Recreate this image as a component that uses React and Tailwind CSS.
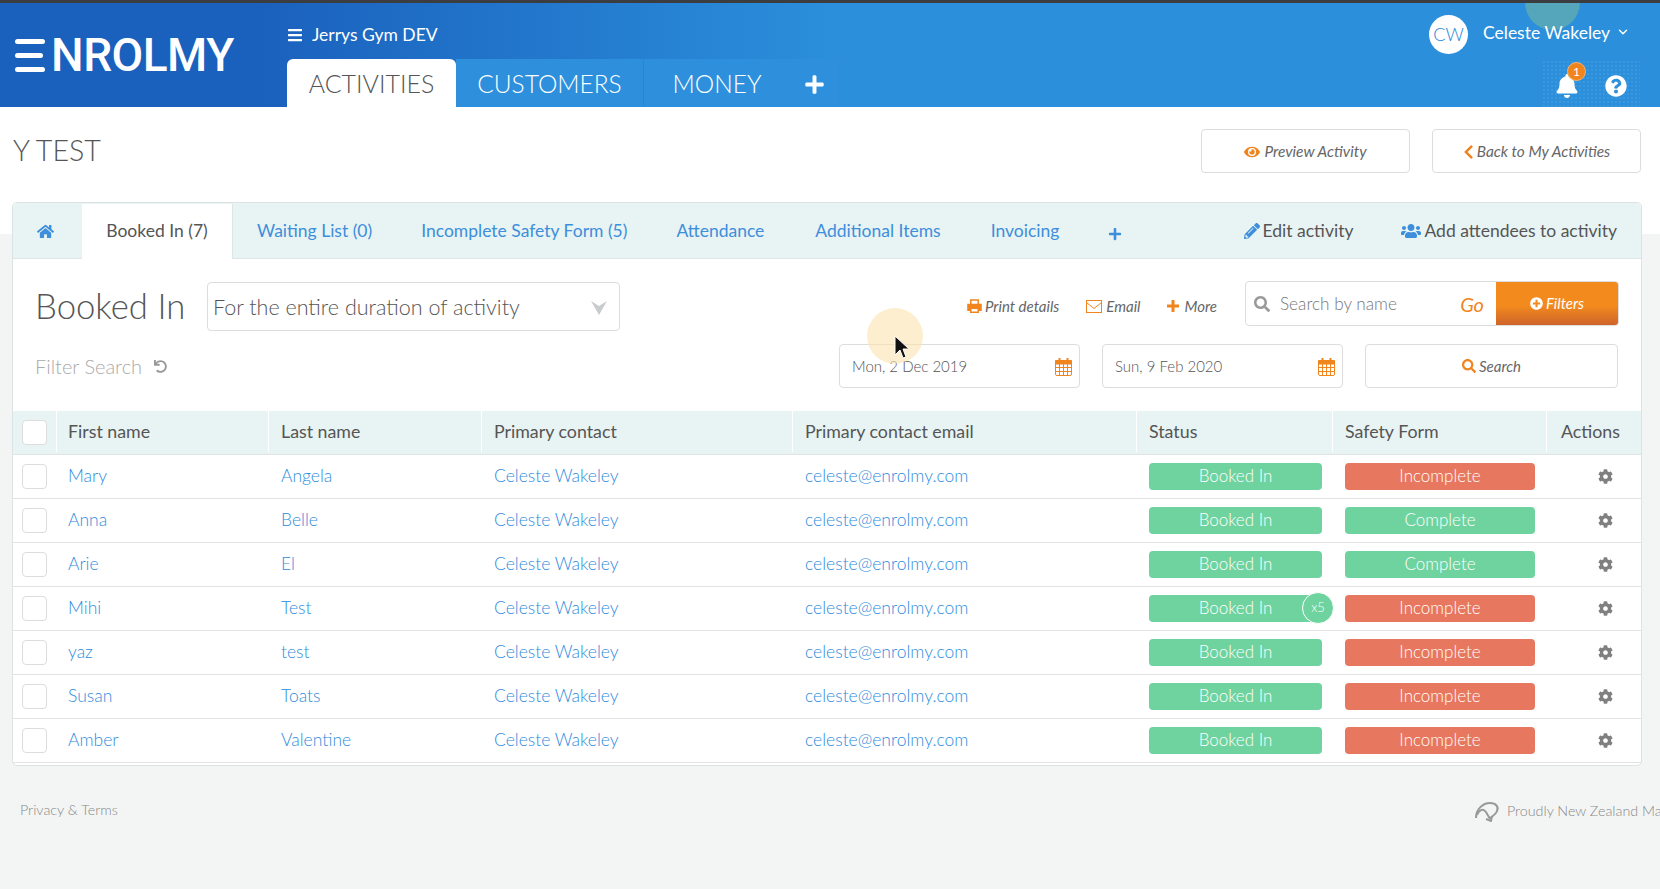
import {
  FaBars, FaBell, FaChevronLeft, FaCog, FaEye, FaHome, FaPencilAlt, FaPlus, FaPlusCircle,
  FaQuestionCircle, FaSearch, FaUndo, FaUsers,
} from 'react-icons/fa';
import { ChevronDown } from 'lucide-react';

const rows = [
  ['Mary', 'Angela', 'Incomplete'],
  ['Anna', 'Belle', 'Complete'],
  ['Arie', 'El', 'Complete'],
  ['Mihi', 'Test', 'Incomplete', 'x5'],
  ['yaz', 'test', 'Incomplete'],
  ['Susan', 'Toats', 'Incomplete'],
  ['Amber', 'Valentine', 'Incomplete'],
];

const tabs = [
  ['Waiting List (0)', 'ml-[24px]'],
  ['Incomplete Safety Form (5)', 'ml-[49px]'],
  ['Attendance', 'ml-[49px]'],
  ['Additional Items', 'ml-[51px]'],
  ['Invoicing', 'ml-[50px]'],
];

const gridCols = 'grid grid-cols-[44px_212px_213px_311px_344px_196px_214px_1fr]';

const Logo = () => (
  <div className='flex items-center w-[287px] pl-[15px] pt-[35px] text-white self-start'>
    <div className='flex flex-col justify-between h-[33px] w-[30px] mr-[6px]'>
      <div className='h-[5px] w-[30px] bg-white rounded-full'></div>
      <div className='h-[5px] w-[28px] bg-white rounded-full'></div>
      <div className='h-[5px] w-[30px] bg-white rounded-full'></div>
    </div>
    <span className='font-[Roboto,sans-serif] text-[46px] leading-[34px] font-medium tracking-[-0.5px]'>NROLMY</span>
  </div>
);

const Header = () => (
  <header className='relative flex h-[107px] border-t-[3px] border-[#3b3d40] bg-[linear-gradient(90deg,#1a60bd_0%,#1a60bd_15%,#2b8fdb_50%)] text-white overflow-hidden'>
    <div className='absolute left-[1525px] top-[-28px] w-[55px] h-[55px] rounded-full bg-[#55a5bb]'></div>
    <Logo />
    <div className='flex flex-col'>
      <div className='flex items-center h-[56px] pt-[8px] text-[17.5px]'>
        <FaBars className='w-[16px] h-[16px] mr-[9px]' />
        <span>Jerrys Gym DEV</span>
      </div>
      <nav className='flex h-[48px] text-[24.5px] font-light'>
        <div className='flex items-center justify-center w-[169px] pt-[2px] text-[25px] bg-white text-[#555] rounded-t-[6px]'>ACTIVITIES</div>
        <div className='flex items-center justify-center w-[188px] pt-[2px] bg-[#2e90dc] border-r border-[#2a86cf]'>CUSTOMERS</div>
        <div className='flex items-center justify-center w-[146px] pt-[2px] bg-[#2e90dc]'>MONEY</div>
        <div className='flex items-center justify-center w-[48px] pt-[2px] bg-[#2e90dc]'>
          <FaPlus className='w-[21px] h-[21px]' />
        </div>
      </nav>
    </div>
    <div className='relative ml-auto flex flex-col w-[231px]'>
      <div className='flex items-center h-[40px] mt-[11px]'>
        <div className='flex items-center justify-center w-[39px] h-[39px] rounded-full bg-white text-[#1f86d8] text-[18px] font-light'>CW</div>
        <span className='ml-[15px] mb-[2px] text-[17.5px]'>Celeste Wakeley</span>
        <ChevronDown className='w-[14px] h-[14px] ml-[6px] mb-[5px]' strokeWidth={2.5} />
      </div>
      <div className='flex items-center ml-[113px] mt-[6px] w-[98px] h-[47px] pl-[13px] pt-[5px] bg-[radial-gradient(#ffffff14_1px,transparent_1px)] bg-[length:4px_4px]'>
        <div className='relative'>
          <FaBell className='w-[24px] h-[24px]' />
          <span className='absolute left-[12px] top-[-12px] flex items-center justify-center w-[19px] h-[19px] rounded-full bg-[#f0851e] border border-[#f8b36b] text-[12px]'>1</span>
        </div>
        <FaQuestionCircle className='w-[22px] h-[22px] ml-[26px]' />
      </div>
    </div>
  </header>
);

const TitleBar = () => (
  <section className='flex items-start justify-between h-[127px] bg-white pl-[13px] pr-[19px]'>
    <h1 className='mt-[23px] text-[28.6px] leading-[40px] font-light text-[#555]'>Y TEST</h1>
    <div className='flex gap-[22px] mt-[22px]'>
      <button className='flex items-center justify-center gap-[4px] w-[209px] h-[44px] pt-[1px] bg-white border border-[#ddd] rounded-[4px] text-[15.4px] italic text-[#666]'>
        <FaEye className='w-[16px] h-[16px] text-[#f0851e]' />
        Preview Activity
      </button>
      <button className='flex items-center justify-center gap-[3px] w-[209px] h-[44px] pt-[1px] bg-white border border-[#ddd] rounded-[4px] text-[15.4px] italic text-[#666]'>
        <FaChevronLeft className='w-[11px] h-[16px] text-[#f0851e]' />
        Back to My Activities
      </button>
    </div>
  </section>
);

const TabBar = () => (
  <div className='flex items-center h-[56px] pt-[1px] bg-[#e8f3f3] border-b border-[#dde6e6] rounded-t-[5px] text-[17.5px] text-[#3d8edb]'>
    <div className='flex items-center justify-center w-[69px] pr-[5px]'>
      <FaHome className='w-[17px] h-[17px] text-[#3d8edb]' />
    </div>
    <div className='flex items-center justify-center w-[151px] h-[55px] bg-white text-[#555] border-r border-[#dde6e6]'>Booked In (7)</div>
    {tabs.map(([label, gap]) => (
      <span key={label} className={gap}>{label}</span>
    ))}
    <FaPlus className='w-[14px] h-[14px] ml-[49px] mt-[5px]' />
    <span className='flex items-center ml-auto text-[#555]'>
      <FaPencilAlt className='w-[16px] h-[16px] mr-[3px] text-[#3d8edb]' />
      Edit activity
    </span>
    <span className='flex items-center ml-[48px] mr-[24px] text-[#555]'>
      <FaUsers className='w-[20px] h-[20px] mr-[3px] text-[#3d8edb]' />
      Add attendees to activity
    </span>
  </div>
);

const CalendarIcon = () => (
  <svg viewBox='0 0 17 18' className='w-[17px] h-[18px]' fill='none' stroke='#f0851e'>
    <rect x='0.5' y='2.5' width='16' height='15' rx='1.5' strokeWidth='1' />
    <path d='M0.5 2.5h16v3.5h-16z' fill='#f0851e' />
    <path d='M4.5 6v11M8.5 6v11M12.5 6v11M1 9.5h15M1 13.5h15' strokeWidth='1' />
    <path d='M4.5 0.5v3M12.5 0.5v3' strokeWidth='2' strokeLinecap='round' />
  </svg>
);

const PrintIcon = () => (
  <svg viewBox='0 0 16 15' className='w-[15px] h-[14px] mr-[3px]' fill='none' stroke='#f0851e' strokeWidth='1.6'>
    <path d='M4 6V1h8v5' />
    <path d='M4 12H1V6h14v6h-3' fill='#f0851e' />
    <rect x='4' y='10' width='8' height='4.2' fill='#fff' />
  </svg>
);

const MailIcon = () => (
  <svg viewBox='0 0 16 13' className='w-[16px] h-[13px] mr-[4px]' fill='none' stroke='#f0851e' strokeWidth='1'>
    <rect x='0.5' y='0.5' width='15' height='12' />
    <path d='M0.5 2.5L8 8.5L15.5 2.5' />
  </svg>
);

const PlusIcon = () => (
  <svg viewBox='0 0 12 12' className='w-[12px] h-[12px] mr-[5px]'>
    <path d='M4.5 0h3v4.5H12v3H7.5V12h-3V7.5H0v-3h4.5z' fill='#f0851e' />
  </svg>
);

const DateInput = ({ value }) => (
  <div className='flex items-center justify-between w-[241px] h-[44px] border border-[#ddd] rounded-[4px] pl-[12px] pr-[7px] pt-[1px] text-[15px] font-light text-[#555]'>
    {value}
    <CalendarIcon />
  </div>
);

const Toolbar = () => (
  <div className='h-[152px] pl-[22px] pr-[22px] pt-[22px]'>
    <div className='flex h-[50px]'>
      <h2 className='w-[172px] text-[34.7px] leading-[50px] font-light text-[#555]'>Booked In</h2>
      <div className='flex items-center justify-between w-[413px] h-[49px] mt-[1px] border border-[#ddd] rounded-[4px] pl-[5px] pr-[12px] pt-[1px] text-[21.5px] font-light text-[#555]'>
        For the entire duration of activity
        <svg viewBox='0 0 16 16' className='w-[16px] h-[16px]'>
          <path d='M0 2L8 7L16 2L8 16Z' fill='#c9cccc' />
        </svg>
      </div>
      <div className='flex items-center ml-auto h-[50px] text-[15px] italic text-[#666]'>
        <PrintIcon />
        Print details
        <span className='w-[27px]'></span>
        <MailIcon />
        Email
        <span className='w-[27px]'></span>
        <PlusIcon />
        More
      </div>
      <div className='flex h-[45px] w-[374px] ml-[28px] border border-[#ddd] rounded-[4px] overflow-hidden'>
        <div className='flex items-center flex-1 pl-[8px] pr-[12px] pt-[1px] text-[17.2px] font-light text-[#777]'>
          <FaSearch className='w-[16px] h-[16px] mr-[10px] text-[#999]' />
          Search by name
          <span className='ml-auto text-[20px] font-normal italic text-[#f0851e]'>Go</span>
        </div>
        <div className='flex items-center justify-center gap-[3px] w-[122px] bg-[linear-gradient(180deg,#f28a1e_0%,#f28a1e_55%,#cf6429_100%)] text-white text-[15px] italic'>
          <FaPlusCircle className='w-[13px] h-[13px]' />
          Filters
        </div>
      </div>
    </div>
    <div className='flex items-center mt-[13px] h-[44px]'>
      <span className='text-[20px] font-light text-[#aaa]'>Filter Search</span>
      <FaUndo className='w-[13px] h-[13px] ml-[12px] text-[#999]' />
      <div className='flex gap-[22px] ml-auto mr-[1px]'>
        <DateInput value='Mon, 2 Dec 2019' />
        <DateInput value='Sun, 9 Feb 2020' />
        <button className='flex items-center justify-center gap-[3px] w-[253px] h-[44px] border border-[#ddd] rounded-[4px] text-[15px] italic text-[#666]'>
          <FaSearch className='w-[14px] h-[14px] text-[#f0851e]' />
          Search
        </button>
      </div>
    </div>
  </div>
);

const Checkbox = () => (
  <div className='w-[25px] h-[25px] bg-white border border-[#ddd] rounded-[4px]'></div>
);

const Pill = ({ label, wide, color }) => (
  <div className={`flex items-center justify-center h-[27px] pb-[2px] rounded-[4px] text-white text-[17px] ${wide ? 'w-[190px]' : 'w-[173px]'} ${color}`}>
    {label}
  </div>
);

const Table = () => (
  <div>
    <div className={`${gridCols} h-[44px] pb-[2px] bg-[#e8f3f3] border-b border-[#dfe5e5] text-[17.8px] text-[#555]`}>
      <div className='flex items-center pl-[9px] pt-[2px] border-r border-white'><Checkbox /></div>
      <div className='flex items-center pl-[11px] border-r border-white'>First name</div>
      {['Last name', 'Primary contact', 'Primary contact email', 'Status', 'Safety Form'].map((h) => (
        <div key={h} className='flex items-center pl-[12px] border-r border-white'>{h}</div>
      ))}
      <div className='flex items-center pl-[14px]'>Actions</div>
    </div>
    {rows.map(([first, last, safety, count]) => (
      <div key={first} className={`${gridCols} h-[44px] border-b border-[#e3e3e3] text-[17.5px] font-light text-[#2f8cdc]`}>
        <div className='flex items-center pl-[9px]'><Checkbox /></div>
        <div className='flex items-center pl-[11px]'>{first}</div>
        <div className='flex items-center pl-[12px]'>{last}</div>
        <div className='flex items-center pl-[12px]'>Celeste Wakeley</div>
        <div className='flex items-center pl-[12px]'>celeste@enrolmy.com</div>
        <div className='flex items-center pl-[12px]'>
          <div className='relative'>
            <Pill label='Booked In' color='bg-[#6fd3a0]' />
            {count && (
              <span className='absolute left-[153px] top-[-3px] flex items-center justify-center w-[32px] h-[32px] rounded-full bg-[#6fd3a0] border border-white text-white text-[13px]'>{count}</span>
            )}
          </div>
        </div>
        <div className='flex items-center pl-[12px]'>
          <Pill label={safety} wide color={safety === 'Complete' ? 'bg-[#6fd3a0]' : 'bg-[#e8775f]'} />
        </div>
        <div className='flex items-center pl-[51px]'>
          <FaCog className='w-[15px] h-[15px] text-[#808080]' />
        </div>
      </div>
    ))}
  </div>
);

const Footer = () => (
  <footer className='flex items-start mt-[33px] pl-[20px] font-light text-[#888] whitespace-nowrap overflow-hidden'>
    <span className='text-[14.3px]'>Privacy &amp; Terms</span>
    <div className='flex items-center ml-auto w-[186px] mt-[1px] text-[14.3px]'>
      <svg viewBox='0 0 26 22' className='w-[26px] h-[22px] mr-[7px] shrink-0' fill='none' stroke='#999' strokeWidth='2'>
        <path d='M2 18C2 9 9 3 16 3c6 0 9 4 7 8-1 3-4 5-7 7' />
        <path d='M3 15c2-5 6-7 9-3l4 7' />
        <path d='M12 19l5 2 1-5' />
      </svg>
      <span>Proudly New Zealand Made</span>
    </div>
  </footer>
);

const App = () => {
  return (
    <div className='relative h-[889px] w-[1660px] overflow-hidden bg-[#f3f5f4] font-[Lato,sans-serif]'>
      <Header />
      <TitleBar />
      <main className='ml-[12px] mr-[18px] -mt-[32px] h-[564px] bg-white border border-[#dde3e3] rounded-[5px]'>
        <TabBar />
        <Toolbar />
        <Table />
      </main>
      <Footer />
      {/* recording highlight + cursor */}
      <div className='absolute left-[867px] top-[308px] w-[56px] h-[56px] rounded-full bg-[#fbe3b0] opacity-60'></div>
      <svg viewBox='0 0 14 24' className='absolute left-[894px] top-[335px] w-[14px] h-[24px]'>
        <path d='M1 1v19l5-5 3 8 3-1-3-8h6z' fill='#111' stroke='#fff' strokeWidth='1' />
      </svg>
    </div>
  );
};

export default App;
